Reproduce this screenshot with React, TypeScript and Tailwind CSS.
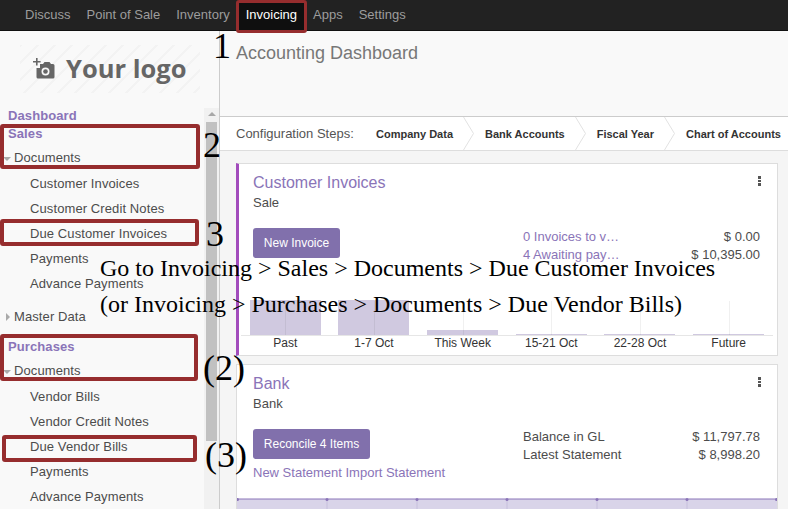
const salesItems = ["Customer Invoices", "Customer Credit Notes", "Due Customer Invoices", "Payments", "Advance Payments"];
const vendorItems = ["Vendor Bills", "Vendor Credit Notes", "Due Vendor Bills", "Payments", "Advance Payments"];
const navItems = ["Discuss", "Point of Sale", "Inventory", "Invoicing", "Apps", "Settings"];
const steps = ["Company Data", "Bank Accounts", "Fiscal Year", "Chart of Accounts"];
const bars = [
  { label: "Past", height: "h-[35px]" },
  { label: "1-7 Oct", height: "h-[35px]" },
  { label: "This Week", height: "h-[5px]" },
  { label: "15-21 Oct", height: "h-px" },
  { label: "22-28 Oct", height: "h-px" },
  { label: "Future", height: "h-px" },
];

function Kebab() {
  return (
    <div className="flex flex-col gap-[1px]">
      <span className="w-[3px] h-[2.5px] bg-[#555]" />
      <span className="w-[3px] h-[2.5px] bg-[#555]" />
      <span className="w-[3px] h-[2.5px] bg-[#555]" />
    </div>
  );
}

function SubItems({ items }: { items: string[] }) {
  return (
    <ul className="mt-[1px]">
      {items.map((item) => (
        <li key={item} className="h-[25px] leading-[25px] pl-[30px]">{item}</li>
      ))}
    </ul>
  );
}

function Caret({ open }: { open?: boolean }) {
  if (open) {
    return <span className="w-0 h-0 mt-[2px] mr-[3px] ml-[3px] border-x-[4px] border-x-transparent border-t-[4px] border-t-[#aaa]" />;
  }
  return <span className="w-0 h-0 mr-[4px] ml-[6px] border-y-[4px] border-y-transparent border-l-[4px] border-l-[#aaa]" />;
}

function Sidebar() {
  return (
    <aside className="w-[220px] shrink-0 bg-[#f9f9f9] border-r border-[#ccc] flex flex-col overflow-hidden">
      {/* logo */}
      <div className="h-[75px] pt-[14px] pl-[20px]">
        <div className="w-[180px] h-[48px] flex items-center pl-[13px] gap-[11px] bg-[repeating-linear-gradient(135deg,#f3f3f3_0px,#f3f3f3_2px,#f9f9f9_2px,#f9f9f9_12px)]">
          <svg width="22" height="22" viewBox="0 0 22 22" fill="#666">
            <path d="M0 3h3V0h1.6v3h3v1.6h-3v3H3v-3H0z" />
            <path fillRule="evenodd" d="M7 6h3l1.5-2h5L18 6h2a1.5 1.5 0 0 1 1.500 1.500V19a1.500 1.500 0 0 1-1.500 1.500H5A1.500 1.500 0 0 1 3.500 19V10H7zm5.500 3.500a4 4 0 1 0 0 8 4 4 0 0 0 0-8z" />
            <circle cx="12.500" cy="13.500" r="2.300" />
          </svg>
          <span className="font-['Open_Sans',sans-serif] font-bold text-[25.5px] text-[#666] leading-none">Your logo</span>
        </div>
      </div>

      {/* menu */}
      <div className="flex flex-1 min-h-0">
        <nav className="flex-1 pt-[1px] text-[13px] text-[#4c4c4c] tracking-[0.1px]">
          <div className="h-[18px] leading-[18px] pl-[8px] font-bold text-[#8a74b8]">Dashboard</div>
          <div className="h-[18px] leading-[18px] pl-[8px] font-bold text-[#8a74b8]">Sales</div>
          <div className="mt-[3px] h-[24px] flex items-center"><Caret open />Documents</div>
          <SubItems items={salesItems} />
          <div className="mt-[9px] h-[24px] flex items-center"><Caret />Master Data</div>
          <div className="mt-[9px] h-[18px] leading-[18px] pl-[8px] font-bold text-[#8a74b8]">Purchases</div>
          <div className="mt-[3px] h-[24px] flex items-center"><Caret open />Documents</div>
          <SubItems items={vendorItems} />
        </nav>
        <div className="w-[15px] shrink-0 mt-[2px] bg-[#f1f1f1] flex flex-col items-center">
          <span className="mt-[4px] w-0 h-0 border-x-[4px] border-x-transparent border-b-[4px] border-b-[#a8a8a8]" />
          <span className="mt-[6px] w-[11px] h-[319px] bg-[#c1c1c1]" />
        </div>
      </div>
    </aside>
  );
}

function ConfigSteps() {
  return (
    <div className="h-[34px] shrink-0 bg-white border-b border-[#ddd] flex items-center pl-[16px] whitespace-nowrap">
      <span className="text-[13px] text-[#555] w-[140px] shrink-0">Configuration Steps:</span>
      {steps.map((step, i) => (
        <div key={step} className="flex items-center shrink-0">
          <span className="text-[11px] font-bold text-[#333] pt-[2px]">{step}</span>
          {i < steps.length - 1 && (
            <svg width="11" height="33" viewBox="0 0 11 33" className="ml-[10px] mr-[11px]" fill="none" stroke="#e2e2e2">
              <path d="M0.500 0L10.500 16.500L0.500 33" />
            </svg>
          )}
        </div>
      ))}
    </div>
  );
}

function InvoiceCard() {
  return (
    <section className="h-[193px] shrink-0 bg-white border border-[#ddd] border-l-[3px] border-l-[#a24cbc] flex flex-col">
      <div className="flex justify-between pt-[10px] pl-[14px] pr-[16px]">
        <div>
          <h2 className="text-[16px] leading-[18px] text-[#8a74b8]">Customer Invoices</h2>
          <p className="text-[13px] leading-[15px] mt-[3px] text-[#4c4c4c]">Sale</p>
        </div>
        <div className="mt-[2px]"><Kebab /></div>
      </div>
      <div className="flex justify-between pl-[14px] pr-[17px] mt-[18px] h-[74px]">
        <button className="w-[87px] h-[30px] rounded-[3px] bg-[#8170ac] text-white text-[12px]">New Invoice</button>
        <div className="w-[237px] text-[13px] leading-[18px]">
          <div className="flex justify-between">
            <span className="text-[#8a74b8]">0 Invoices to v…</span>
            <span className="text-[#4c4c4c]">$ 0.00</span>
          </div>
          <div className="flex justify-between">
            <span className="text-[#8a74b8]">4 Awaiting pay…</span>
            <span className="text-[#4c4c4c]">$ 10,395.00</span>
          </div>
        </div>
      </div>
      {/* chart */}
      <div className="grid grid-cols-6 pl-[2px] pr-[4px] mt-[-1px]">
        {bars.map((bar) => (
          <div key={bar.label} className="flex flex-col items-center">
            <div className="relative w-full h-[35px] flex items-end justify-center border-b border-[#e6e6e6]">
              <div className={`w-[71px] bg-[#d0c9e0] ${bar.height}`} />
              <div className="absolute inset-y-0 left-1/2 w-px bg-[#0000000f]" />
            </div>
            <span className="text-[12px] leading-[15px] text-[#333]">{bar.label}</span>
          </div>
        ))}
      </div>
    </section>
  );
}

function BankCard() {
  return (
    <section className="flex-1 min-h-0 mt-[8px] bg-white border border-[#ddd] border-b-0 flex flex-col">
      <div className="flex justify-between pt-[10px] pl-[16px] pr-[16px]">
        <div>
          <h2 className="text-[16px] leading-[18px] text-[#8a74b8]">Bank</h2>
          <p className="text-[13px] leading-[15px] mt-[3px] text-[#4c4c4c]">Bank</p>
        </div>
        <div className="mt-[2px]"><Kebab /></div>
      </div>
      <div className="flex justify-between pl-[16px] pr-[17px] mt-[18px]">
        <div>
          <button className="w-[117px] h-[30px] rounded-[3px] bg-[#8170ac] text-white text-[12px]">Reconcile 4 Items</button>
          <p className="mt-[6px] text-[13px] leading-[15px] text-[#8a74b8]">New Statement Import Statement</p>
        </div>
        <div className="w-[237px] -mt-px text-[13px] leading-[18px] text-[#4c4c4c]">
          <div className="flex justify-between"><span>Balance in GL</span><span>$ 11,797.78</span></div>
          <div className="flex justify-between"><span>Latest Statement</span><span>$ 8,998.20</span></div>
        </div>
      </div>
      <svg viewBox="0 0 540 11" className="mt-[18px] w-full h-[11px] shrink-0">
        <rect x="0" y="1" width="540" height="10" fill="#d9d4e9" />
        <path d="M90 1v10M180 1v10M270 1v10M360 1v10M450 1v10" stroke="#c6bfdc" />
        <path d="M0 1H540" stroke="#8a74b8" />
        <g fill="#8a74b8">
          <circle cx="0.500" cy="1.500" r="1.500" />
          <circle cx="90" cy="1.500" r="1.500" />
          <circle cx="180" cy="1.500" r="1.500" />
          <circle cx="270" cy="1.500" r="1.500" />
          <circle cx="360" cy="1.500" r="1.500" />
          <circle cx="450" cy="1.500" r="1.500" />
          <circle cx="539.500" cy="1.500" r="1.500" />
        </g>
      </svg>
    </section>
  );
}

export default function App() {
  return (
    <div className="relative w-[788px] h-[509px] overflow-hidden flex flex-col bg-[#f5f5f5] font-['Liberation_Sans',Arial,sans-serif]">
      {/* top bar */}
      <header className="h-[31px] shrink-0 bg-[#222] border-b border-[#111] flex pl-[17px] text-[13px] text-[#9d9d9d]">
        {navItems.map((item) => (
          <a
            key={item}
            className={item === "Invoicing" ? "px-[8px] leading-[30px] bg-[#0f0f0f] text-white" : "px-[8px] leading-[30px]"}
          >
            {item}
          </a>
        ))}
      </header>

      <div className="flex flex-1 min-h-0">
        <Sidebar />
        <main className="flex-1 min-w-0 flex flex-col">
          <div className="h-[86px] shrink-0 bg-[#f9f9f9] border-b border-[#ccc] pl-[16px] pt-[10px]">
            <h1 className="text-[18px] leading-[24px] text-[#777]">Accounting Dashboard</h1>
          </div>
          <ConfigSteps />
          <div className="flex-1 min-h-0 flex flex-col pt-[12px] pl-[16px] pr-[10px]">
            <InvoiceCard />
            <BankCard />
          </div>
        </main>
      </div>

      {/* red annotation boxes */}
      <div className="absolute left-[236px] top-0 w-[71px] h-[33px] border-[3px] border-[#962d2e] rounded-[3px]" />
      <div className="absolute left-0 top-[124px] w-[200px] h-[45px] border-[4px] border-[#962d2e] rounded-[3px]" />
      <div className="absolute left-0 top-[219px] w-[199px] h-[27px] border-[4px] border-[#962d2e] rounded-[3px]" />
      <div className="absolute left-0 top-[334px] w-[198px] h-[47px] border-[4px] border-[#962d2e] rounded-[3px]" />
      <div className="absolute left-[2px] top-[435px] w-[195px] h-[27px] border-[4px] border-[#962d2e] rounded-[3px]" />

      {/* annotation text */}
      <div className="absolute inset-0 font-['Liberation_Serif',serif] text-black pointer-events-none">
        <span className="absolute left-[213px] top-[26px] text-[36px] leading-[40px]">1</span>
        <span className="absolute left-[203px] top-[125px] text-[36px] leading-[40px]">2</span>
        <span className="absolute left-[206px] top-[214px] text-[36px] leading-[40px]">3</span>
        <span className="absolute left-[203px] top-[348px] text-[36px] leading-[40px]">(2)</span>
        <span className="absolute left-[205px] top-[435px] text-[36px] leading-[40px]">(3)</span>
        <p className="absolute left-[100px] top-[250px] text-[24px] leading-[36px] whitespace-nowrap">
          Go to Invoicing &gt; Sales &gt; Documents &gt; Due Customer Invoices
          <br />
          (or Invoicing &gt; Purchases &gt; Documents &gt; Due Vendor Bills)
        </p>
      </div>
    </div>
  );
}
